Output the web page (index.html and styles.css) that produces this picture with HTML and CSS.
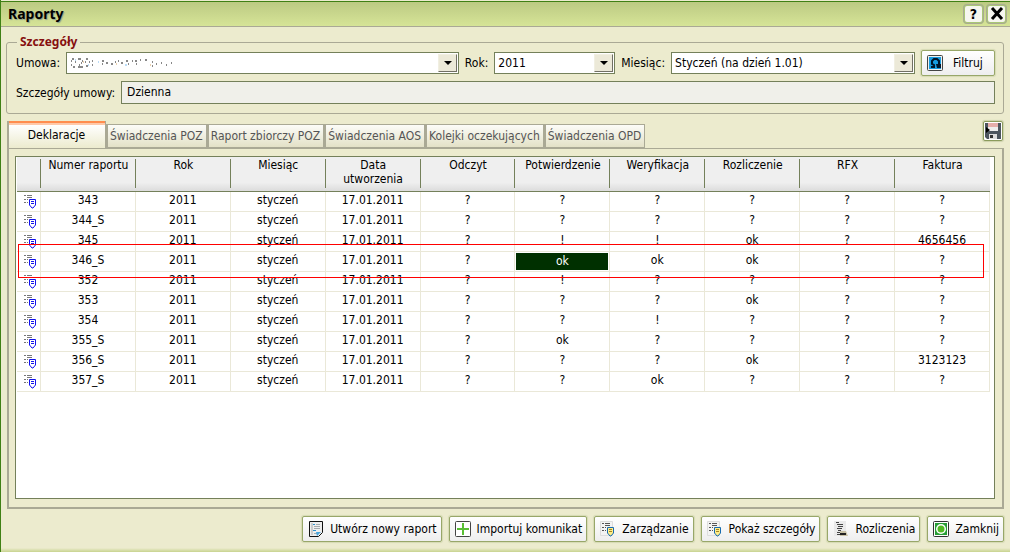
FILE: index.html
```html
<!DOCTYPE html>
<html lang="pl">
<head>
<meta charset="utf-8">
<title>Raporty</title>
<link rel="stylesheet" href="styles.css">
</head>
<body>
<svg class="defs" width="0" height="0" aria-hidden="true">
  <symbol id="row-report" viewBox="0 0 14 14">
    <path d="M0 .5h2M3 .5h5M3 2.500h5M0 4.500h2M3 4.500h1M0 7.500h2M3 7.500h1" stroke="#777"/>
    <path d="M5.500 4.500h6v5.500l-2.500 3h-1L5.500 10zM7 6.500h3M7 8.500h3" fill="none" stroke="#1212ec"/>
  </symbol>
  <symbol id="report" viewBox="0 0 16 16">
    <path d="M.5.5h12v14H.5z" fill="#f3f3f3" stroke="#ddd"/>
    <path d="M2 2.500h2M5 2.500h5M5 4.500h5M2 6.500h2M5 6.500h1M2 9.500h2M5 9.500h1" stroke="#555"/>
    <path d="M7.500 6.500h6v5.500l-2.500 3h-1L7.500 12z" fill="#ffec87" stroke="#176bb0"/><path d="M9 8.500h3M9 10.500h3" stroke="#a48422"/>
  </symbol>
</svg>
<main class="window">
  <header class="titlebar">
    <h1 class="title">Raporty</h1>
    <button class="title-button" type="button" aria-label="Pomoc">?</button>
    <button class="title-button" type="button" aria-label="Zamknij okno"><svg width="14" height="14" viewBox="0 0 14 14"><path d="M2 1l10 11M12 1L2 12" stroke="#000" stroke-width="3"/></svg></button>
  </header>
  <div class="content">
    <fieldset class="details">
      <legend>Szczegóły</legend>
      <div class="filters">
        <label for="contract">Umowa:</label>
        <span class="select-wrap contract-wrap"><select id="contract"><option></option></select><svg class="redacted" width="106" height="12" viewBox="0 0 106 12" aria-hidden="true"><path d="M4 1h2M3 3h1M7 4h1M3 7h1M5 9h2M10 1h3M14 3h1M13 5h1M11 7h1M10 9h5M18 1h2M17 4h1M21 4h1M18 8h2M24 3h1M24 7h1M34 3h2M34 6h1M38 5h2M43 6h2M47 4h1M50 3h1M53 5h2M58 3h2M60 6h1M64 3h1M67 3h2M68 6h1M72 2h1M77 2h2M84 4h1M84 8h1M88 6h1M93 5h1M98 7h1M103 5h1" stroke="#111" stroke-width="1"/><path d="M7 2h1M20 7h1M30 4h1M57 7h2" stroke="#79baf0"/><path d="M15 4h1M48 6h1M82 7h1" stroke="#d7a25a"/></svg></span>
        <label for="year">Rok:</label>
        <span class="select-wrap year-wrap"><select id="year"><option>2011</option></select></span>
        <label for="month">Miesiąc:</label>
        <span class="select-wrap month-wrap"><select id="month"><option>Styczeń (na dzień 1.01)</option></select></span>
        <button class="button filter-button" type="button"><svg width="16" height="16" viewBox="0 0 16 16"><rect x=".5" y=".5" width="15" height="15" rx="1" fill="#eee" stroke="#444"/><path d="M2 2h12v12H2z" fill="#179ce0"/><path d="M4 12h3v-2L5 9V6l2-2h3l2 2v4" fill="none" stroke="#00152b" stroke-width="2"/><path d="M9 9h5v4h-4z" fill="#00152b"/></svg><span>Filtruj</span></button>
      </div>
      <div class="contract-details">
        <label for="contract-details">Szczegóły umowy:</label>
        <input id="contract-details" value="Dzienna" readonly>
      </div>
    </fieldset>
    <div class="tabs-line">
      <div class="tabs" role="tablist">
        <button class="tab active" type="button" role="tab" aria-selected="true">Deklaracje</button>
        <button class="tab" type="button" role="tab">Świadczenia POZ</button>
        <button class="tab" type="button" role="tab">Raport zbiorczy POZ</button>
        <button class="tab" type="button" role="tab">Świadczenia AOS</button>
        <button class="tab" type="button" role="tab">Kolejki oczekujących</button>
        <button class="tab" type="button" role="tab">Świadczenia OPD</button>
      </div>
      <button class="save" type="button" aria-label="Zapisz"><svg width="16" height="16" viewBox="0 0 16 16"><path d="M0 0h16v16H2l-2-2z" fill="#4c555e"/><path d="M3 0h10v8H3z" fill="#eee"/><path d="M3 1h10M3 3h10" stroke="#db6f68"/><path d="M4 11h8v5H4z" fill="#ddd"/><path d="M5 12h3v3H5z" fill="#333"/><path d="M1 4l4 3-4 3z" fill="#000"/></svg></button>
    </div>
    <section class="panel">
      <div class="table-frame">
        <table>
          <colgroup><col class="icon-column"><col span="10"></colgroup>
          <thead><tr><th aria-label="Szczegóły"></th><th>Numer raportu</th><th>Rok</th><th>Miesiąc</th><th>Data utworzenia</th><th>Odczyt</th><th>Potwierdzenie</th><th>Weryfikacja</th><th>Rozliczenie</th><th>RFX</th><th>Faktura</th></tr></thead>
          <tbody id="reports"></tbody>
        </table>
        <div class="row-highlight"></div>
      </div>
    </section>
    <footer class="actions">
      <button class="button" type="button"><svg width="16" height="16" viewBox="0 0 16 16"><path d="M1.500.5h13v11l-4 4h-9z" fill="#eee" stroke="#111"/><path d="M4 2v12" stroke="#aaa"/><path d="M5 3.500h2M5 9.500h3" stroke="#2b92ce"/><path d="M8 3.500h4M6 5.500h6M6 7.500h6M6 12.500h3" stroke="#a4aaae"/><path d="M8 11h5l-4 4z" fill="#4aa5dc"/></svg>Utwórz nowy raport</button>
      <button class="button" type="button"><svg width="16" height="16" viewBox="0 0 16 16"><rect x=".5" y=".5" width="15" height="15" rx="1" fill="#fff" stroke="#444"/><path d="M8 2v12M2 8h12" stroke="#5abf35" stroke-width="2"/></svg>Importuj komunikat</button>
      <button class="button" type="button"><svg width="16" height="16"><use href="#report"/></svg>Zarządzanie</button>
      <button class="button" type="button"><svg width="16" height="16"><use href="#report"/></svg>Pokaż szczegóły</button>
      <button class="button" type="button"><svg width="16" height="16" viewBox="0 0 16 16"><path d="M1 0h12v15H1z" fill="#eaeaea"/><path d="M3 1.500h3M4 3.500h6M5 5.500h5M4 7.500h5M5 9.500h3M4 11.500h3M4 13.500h3" stroke="#444"/><path d="M7 10h6l2 5H7z" fill="#c9c2a6"/><path d="M7 12h6v2H7z" fill="#222"/></svg>Rozliczenia</button>
      <button class="button" type="button"><svg width="16" height="16" viewBox="0 0 16 16"><rect x=".5" y=".5" width="15" height="15" rx="1" fill="#fff" stroke="#333"/><path d="M2 2h12v12H2z" fill="#269d36"/><circle cx="8" cy="8" r="5" fill="#fff"/><circle cx="8" cy="8" r="3.500" fill="#50b923"/></svg>Zamknij</button>
    </footer>
  </div>
</main>
<script src="reports.js"></script>
</body>
</html>
```

FILE: styles.css
```css
* { box-sizing: border-box; }
body { margin: 0; background: #ecebce; color: #000; font: 12px/14px "DejaVu Sans Condensed", Tahoma, sans-serif; }
button, input, select { font: inherit; color: inherit; }
.defs { position: absolute; }
.window { min-height: 100vh; padding-top: 1px; border-left: 1px solid #408015; background: linear-gradient(#ecebce, #c7d38e) bottom / 100% 4px no-repeat; display: flex; flex-direction: column; }
.titlebar { display: flex; align-items: center; gap: 2px; height: 26px; padding: 0 3px 0 7px; border-top: 1px solid #408015; border-bottom: 1px solid #aaa995; background: linear-gradient(#bcca83, #d6e497); }
.title { flex: 1; margin: 0; font-family: "Noto Sans", Tahoma, sans-serif; font-size: 14px; line-height: 18px; text-shadow: 1px 1px 1px #8d9d8d; }
.title-button { display: grid; place-items: center; width: 21px; height: 20px; padding: 0; border: 2px solid #a9c676; border-radius: 4px; outline: 1px solid #aaa995; outline-offset: -1px; background: #f6f6ef; font-size: 14px; font-weight: 700; }
.content { flex: 1; display: flex; flex-direction: column; padding: 7px 6px 10px 5px; }
.details { min-width: 0; margin: 0; padding: 0 8px 9px 9px; border: 1px solid #aaa995; border-radius: 3px; }
.details legend { margin-left: 1px; padding: 0 3px; color: #861010; font-family: "Noto Sans", Tahoma, sans-serif; font-weight: 700; line-height: 16px; }
.filters, .contract-details { display: flex; align-items: center; gap: 6px; }
.filters { height: 26px; }
.contract-details { margin-top: 5px; }
.contract-details input { flex: 1; min-width: 0; height: 23px; padding: 0 5px 2px; border: 1px solid #74805a; background: #f0f0ea; outline: 0; }
.select-wrap { position: relative; display: flex; height: 22px; min-width: 0; }
.contract-wrap { flex: 396; }
.year-wrap { flex: 122; }
.month-wrap { flex: 246; }
select { appearance: none; width: 100%; border: 1px solid #74805a; border-radius: 0; padding: 0 20px 0 3px; background: #fff; }
.select-wrap::after { content: ""; position: absolute; top: 2px; right: 2px; width: 17px; bottom: 2px; border: 1px solid; border-color: #f1efe2 #716f64 #716f64 #f1efe2; background: #ece9d8; pointer-events: none; }
.select-wrap::before { content: ""; position: absolute; z-index: 1; top: 9px; right: 7px; border: solid transparent; border-width: 4px 4px 0; border-top-color: #000; pointer-events: none; }
.redacted { position: absolute; left: 2px; top: 6px; pointer-events: none; }
.button { display: flex; align-items: center; gap: 6px; height: 26px; padding: 0 4px 1px 5px; border: 1px solid #98a769; border-radius: 2px; background: linear-gradient(#fff, #eee); box-shadow: 0 0 1px 1px #d6dab4; white-space: nowrap; }
.button svg { flex: none; }
.filter-button { width: 74px; gap: 10px; }
.tabs-line { display: flex; justify-content: space-between; align-items: start; height: 27px; margin-top: 7px; }
.tabs { display: flex; align-items: end; height: 27px; margin-left: 1px; }
.tab { height: 24px; padding: 0 3px 0 2px; border: 1px solid #aaa995; border-left-width: 2px; background: linear-gradient(#fcfcf8, #e3e1c7); color: #555; white-space: nowrap; }
.tab.active { width: 99px; height: 27px; border-width: 0 1px 0 2px; background: linear-gradient(#ff8d4e 0 2px, #ffc9a9 2px 4px, #fff 4px, #ecebce); color: #000; }
.save { display: grid; place-items: center; width: 20px; height: 20px; margin-right: 1px; padding: 0; border: 1px solid #8b9b5c; border-radius: 2px; background: #fff; box-shadow: 0 0 1px 1px #ccd0ab; }
.panel { flex: 1; display: flex; margin: 0 0 0 1px; padding: 7px 7px 8px 6px; border: 2px solid #aaa995; border-top-width: 1px; }
.table-frame { position: relative; flex: 1; min-width: 0; padding: 0 4px 0 1px; border: 1px solid #74805a; background: #fff; }
table { width: 100%; table-layout: fixed; border-collapse: separate; border-spacing: 0; text-align: center; }
.icon-column { width: 24px; }
th { height: 35px; padding: 1px 4px; border-bottom: 1px solid #74805a; background: linear-gradient(to top, transparent 3px, #74805a 3px 32px, transparent 32px) right / 1px 100% no-repeat, linear-gradient(#efefef 75%, #dcdcdc); font-weight: 400; vertical-align: top; }
th:last-child { background: linear-gradient(#efefef 75%, #dcdcdc); }
td { height: 20px; padding: 0 2px; border-right: 1px solid #eae8d8; border-bottom: 1px solid #eae8d8; line-height: 16px; vertical-align: top; }
td svg { display: block; margin: 3px 0 0 5px; }
.selected { display: block; margin: 1px -1px; background: #003000; color: #fff; line-height: 17px; }
.row-highlight { position: absolute; top: 87px; left: 2px; right: 10px; height: 34px; border: 1px solid #f00; pointer-events: none; }
.actions { display: flex; justify-content: flex-end; gap: 7px; margin-top: 7px; }
```

FILE: reports.js
```js
const reports = [
  ["343", "?", "?", "?", "?", "?", "?"],
  ["344_S", "?", "?", "?", "?", "?", "?"],
  ["345", "?", "!", "!", "ok", "?", "4656456"],
  ["346_S", "?", "ok", "ok", "ok", "?", "?"],
  ["352", "?", "!", "?", "?", "?", "?"],
  ["353", "?", "?", "?", "ok", "?", "?"],
  ["354", "?", "?", "!", "?", "?", "?"],
  ["355_S", "?", "ok", "?", "?", "?", "?"],
  ["356_S", "?", "?", "?", "ok", "?", "3123123"],
  ["357_S", "?", "?", "ok", "?", "?", "?"]
];
document.getElementById("reports").innerHTML = reports.map(([number, ...states]) => {
  const values = [number, "2011", "styczeń", "17.01.2011", ...states];
  return `<tr><td><svg width="14" height="14"><use href="#row-report"/></svg></td>${values.map((value, column) =>
    `<td>${number === "346_S" && column === 5 ? `<span class="selected">${value}</span>` : value}</td>`).join("")}</tr>`;
}).join("");
```
